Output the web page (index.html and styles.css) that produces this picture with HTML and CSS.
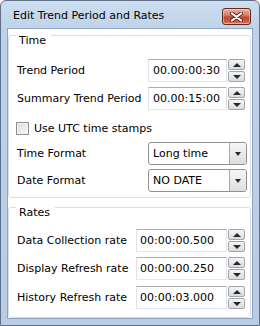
FILE: index.html
```html
<!DOCTYPE html>
<html>
<head>
<meta charset="utf-8">
<link rel="stylesheet" href="styles.css">
</head>
<body>
<div class="window">
  <div class="titlebar">
    <span class="title">Edit Trend Period and Rates</span>
    <div class="close">
      <svg width="13" height="10" viewBox="0 0 13 10">
        <path d="M2 1.5 L11 8.5 M11 1.5 L2 8.5" stroke="#5a2a20" stroke-width="4" stroke-linecap="round"/>
        <path d="M2 1.5 L11 8.5 M11 1.5 L2 8.5" stroke="#ffffff" stroke-width="2.2" stroke-linecap="round"/>
      </svg>
    </div>
  </div>
  <div class="client">
    <div class="group group-time">
      <div class="header">Time</div>
      <div class="row row-first">
        <span class="label">Trend Period</span>
        <div class="spin">
          <div class="field field-time">00.00:00:30</div>
          <div class="buttons"><span class="btn up"><i></i></span><span class="btn down"><i></i></span></div>
        </div>
      </div>
      <div class="row">
        <span class="label">Summary Trend Period</span>
        <div class="spin">
          <div class="field field-time">00.00:15:00</div>
          <div class="buttons"><span class="btn up"><i></i></span><span class="btn down"><i></i></span></div>
        </div>
      </div>
      <div class="check-row">
        <span class="checkbox"></span>
        <span class="label">Use UTC time stamps</span>
      </div>
      <div class="row row-combo">
        <span class="label">Time Format</span>
        <div class="combo"><span class="value">Long time</span><span class="drop"><i></i></span></div>
      </div>
      <div class="row row-combo2">
        <span class="label">Date Format</span>
        <div class="combo"><span class="value">NO DATE</span><span class="drop"><i></i></span></div>
      </div>
    </div>
    <div class="group group-rates">
      <div class="header">Rates</div>
      <div class="row row-first">
        <span class="label">Data Collection rate</span>
        <div class="spin">
          <div class="field field-rate">00:00:00.500</div>
          <div class="buttons"><span class="btn up"><i></i></span><span class="btn down"><i></i></span></div>
        </div>
      </div>
      <div class="row">
        <span class="label">Display Refresh rate</span>
        <div class="spin">
          <div class="field field-rate">00:00:00.250</div>
          <div class="buttons"><span class="btn up"><i></i></span><span class="btn down"><i></i></span></div>
        </div>
      </div>
      <div class="row row-last">
        <span class="label">History Refresh rate</span>
        <div class="spin">
          <div class="field field-rate">00:00:03.000</div>
          <div class="buttons"><span class="btn up"><i></i></span><span class="btn down"><i></i></span></div>
        </div>
      </div>
    </div>
  </div>
</div>
</body>
</html>
```

FILE: styles.css
```css
* { box-sizing: border-box; }
html, body { margin: 0; padding: 0; }
body {
  width: 260px;
  height: 326px;
  overflow: hidden;
  background: #fff;
  font-family: "DejaVu Sans", Verdana, sans-serif;
  font-size: 11px;
  color: #000;
}
.window {
  width: 260px;
  height: 326px;
  border: 1px solid #5f7189;
  border-radius: 6px 6px 0 0;
  background: linear-gradient(#cddef0, #bed2e9 28px, #b8cce5);
  padding: 0 6px 6px 6px;
  display: flex;
  flex-direction: column;
}
.titlebar {
  height: 27px;
  flex: none;
  display: flex;
  align-items: flex-start;
  justify-content: space-between;
  padding: 7px 2px 0 6px;
}
.title {
  line-height: 14px;
  margin-top: 1px;
  font-size: 11px;
}
.close {
  width: 29px;
  height: 17px;
  border: 1px solid #5e2a20;
  border-radius: 3px;
  background: linear-gradient(#eab1a2, #d9806b 40%, #c4452e 55%, #cf5e45 85%, #dc8a70);
  display: flex;
  align-items: center;
  justify-content: center;
  box-shadow: inset 0 0 0 1px rgba(255,255,255,0.35);
}
.client {
  flex: 1;
  background: #fff;
  border: 1px solid #8ea5c1;
  display: flex;
  flex-direction: column;
}
.group {
  border: 1px solid #d5dfe5;
  border-radius: 3px;
  margin: 0 1px 0 0;
  padding: 0 3px 0 8px;
  display: flex;
  flex-direction: column;
}
.group-time { margin-top: 6px; padding-bottom: 5px; }
.group-rates { margin-top: 9px; padding-bottom: 8px; }
.header {
  align-self: flex-start;
  margin: -2px 0 0 -1px;
  padding: 0 5px 0 3px;
  line-height: 13px;
  background: #fff;
}
.row {
  display: flex;
  align-items: center;
  justify-content: space-between;
  height: 23px;
  margin-top: 5px;
}
.row-first { margin-top: 12px; }
.group-rates .row-first { margin-top: 10px; }
.row-last { margin-top: 6px; }
.row-combo { margin-top: 7px; }
.row-combo2 { margin-top: 4px; }
.label { white-space: nowrap; }
.check-row {
  display: flex;
  align-items: center;
  height: 13px;
  margin-top: 12px;
}
.checkbox {
  width: 13px;
  height: 13px;
  margin-left: -1px;
  margin-right: 5px;
  border: 1px solid #8e8f8f;
  background: linear-gradient(135deg, #dcdcdc, #f8f8f8);
  box-shadow: inset 0 0 0 1px #f4f4f4;
}
.spin {
  display: flex;
  align-items: stretch;
  height: 23px;
  margin-right: 2px;
}
.field {
  border: 1px solid #abadb3;
  border-color: #abadb3 #dbdfe6 #e3e9ef #e2e3ea;
  background: #fff;
  padding-left: 4px;
  line-height: 21px;
  white-space: nowrap;
}
.field-time { width: 79px; }
.field-rate { width: 91px; padding-left: 3px; }
.buttons {
  width: 17px;
  margin-left: 1px;
  display: flex;
  flex-direction: column;
  gap: 1px;
}
.btn {
  flex: 1;
  border: 1px solid #a5a5a5;
  border-radius: 2px;
  background: linear-gradient(#f5f5f5, #e8e8e8 50%, #dadada);
  display: flex;
  align-items: center;
  justify-content: center;
}
.btn i {
  width: 0;
  height: 0;
  border-left: 4px solid transparent;
  border-right: 4px solid transparent;
}
.up i { border-bottom: 4px solid #1f2a36; }
.down i { border-top: 4px solid #1f2a36; }
.combo {
  width: 99px;
  height: 23px;
  border: 1px solid #8e8f8f;
  border-radius: 3px;
  display: flex;
  background: #fff;
}
.combo .value {
  flex: 1;
  padding-left: 4px;
  line-height: 21px;
  white-space: nowrap;
}
.combo .drop {
  width: 17px;
  border-left: 1px solid #a7a7a7;
  border-radius: 0 2px 2px 0;
  background: linear-gradient(#f6f6f6, #ebebeb 50%, #dddddd);
  display: flex;
  align-items: center;
  justify-content: center;
}
.combo .drop i {
  width: 0;
  height: 0;
  border-left: 3.5px solid transparent;
  border-right: 3.5px solid transparent;
  border-top: 4px solid #1f2a36;
}
```
